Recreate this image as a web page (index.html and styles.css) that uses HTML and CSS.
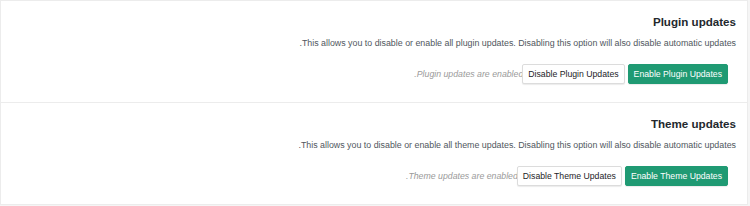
FILE: index.html
```html
<!DOCTYPE html>
<html lang="en">
<head>
  <meta charset="UTF-8">
  <meta name="viewport" content="width=device-width, initial-scale=1.0">
  <title>Update settings</title>
  <link rel="stylesheet" href="styles.css">
</head>
<body>
  <div class="settings" dir="rtl">
    <section class="panel">
      <h3>Plugin updates</h3>
      <p class="desc">This allows you to disable or enable all plugin updates. Disabling this option will also disable automatic updates.</p>
      <div class="actions">
        <button class="btn btn-primary">Enable Plugin Updates</button>
        <button class="btn">Disable Plugin Updates</button>
        <span class="status">Plugin updates are enabled.</span>
      </div>
    </section>

    <section class="panel">
      <h3>Theme updates</h3>
      <p class="desc">This allows you to disable or enable all theme updates. Disabling this option will also disable automatic updates.</p>
      <div class="actions">
        <button class="btn btn-primary">Enable Theme Updates</button>
        <button class="btn">Disable Theme Updates</button>
        <span class="status">Theme updates are enabled.</span>
      </div>
    </section>
  </div>
</body>
</html>
```

FILE: styles.css
```css
:root {
  --green: #1f9a73;
  --border: #ececec;
  --text: #23282d;
  --muted: #50575e;
}

body {
  margin: 0;
  background: #f5f5f5;
  font-family: "Liberation Sans", Arial, sans-serif;
  color: var(--text);
}

.settings {
  width: 748px;
  background: #fff;
}

.panel {
  border: 1px solid var(--border);
  padding: 13px 11px 17px 11px;
  height: 71px;
}

.panel + .panel {
  border-top: none;
}

h3 {
  margin: 0;
  font-size: 11.6px;
  line-height: 16px;
  font-weight: bold;
}

.desc {
  margin: 5px 0 0;
  font-size: 8.85px;
  line-height: 16px;
  color: var(--muted);
}

.actions {
  display: flex;
  align-items: center;
  gap: 3px;
  margin: 13px 8px 0 0;
}

.btn {
  position: relative;
  height: 20px;
  padding: 0 5px;
  font-family: inherit;
  font-size: 8.7px;
  color: #1d2327;
  background: #fff;
  border: 1px solid #dcdcdc;
  border-radius: 2px;
  box-shadow: 0 1px 1px rgba(0, 0, 0, 0.08);
}

.btn-primary {
  background: var(--green);
  border-color: var(--green);
  color: #fff;
}

.status {
  margin-right: -4px;
  font-size: 8.75px;
  font-style: italic;
  color: #9a9a9a;
}
```
